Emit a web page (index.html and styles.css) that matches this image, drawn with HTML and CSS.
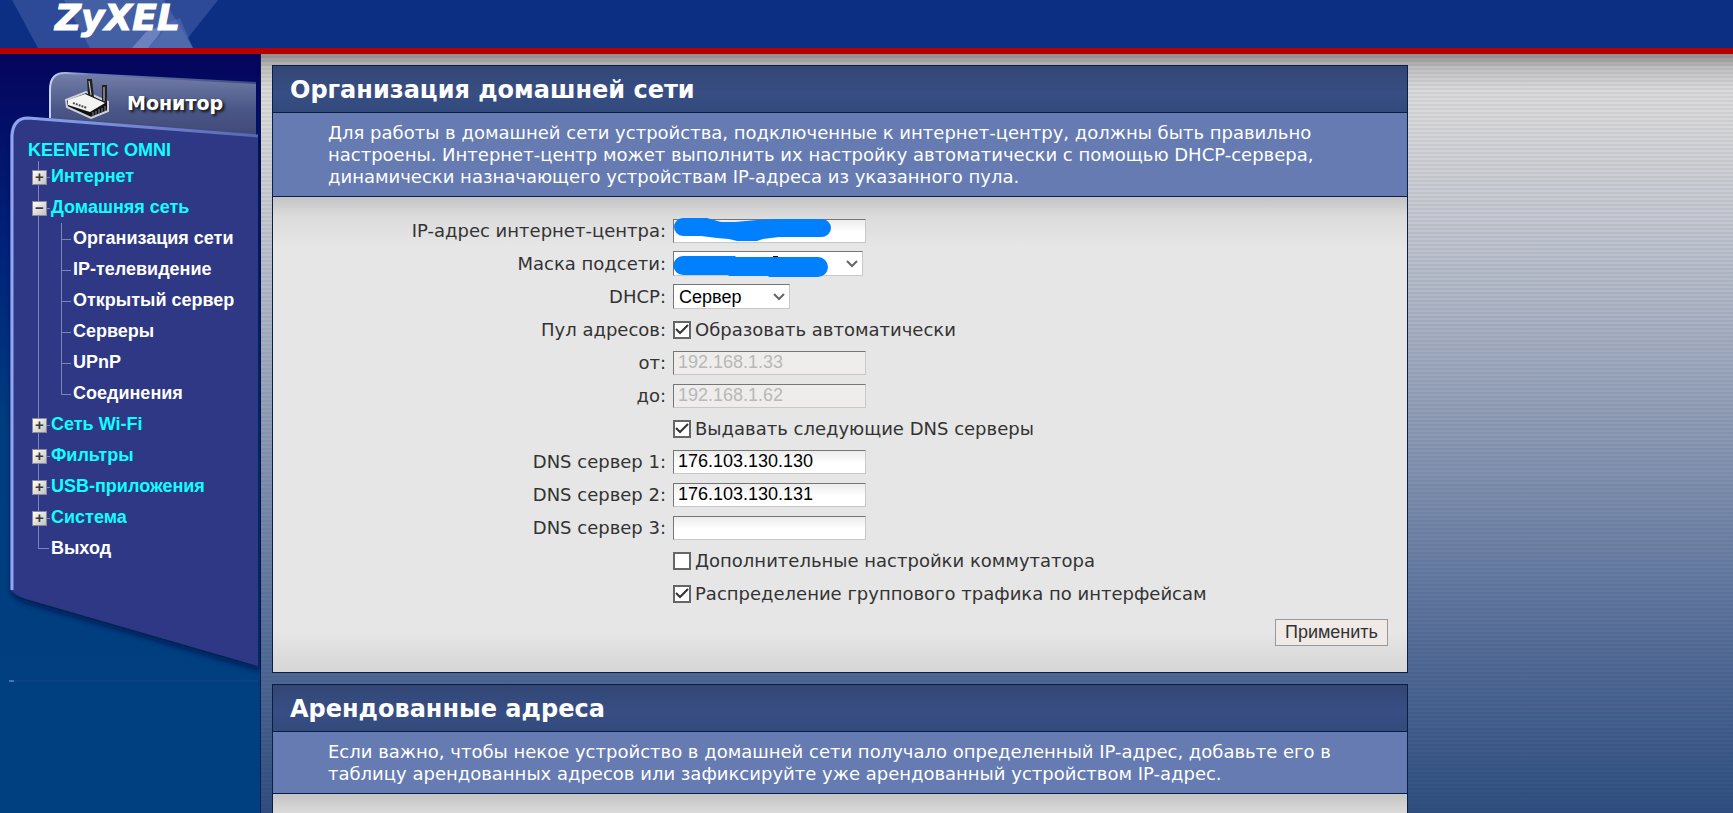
FILE: index.html
```html
<!DOCTYPE html>
<html lang="ru">
<head>
    <meta charset="utf-8">
    <title>Организация домашней сети</title>
    <link rel="stylesheet" href="styles.css">
</head>
<body>
    <header class="header">
        <svg class="header-art" width="240" height="48" viewBox="0 0 240 48" aria-hidden="true">
            <path d="M12 0H218L180 48H38Z" fill="#2c4a97"/>
            <path d="M64 0H164L193 48H90Z" fill="#4460a5"/>
            <path d="M146 32L165 24L158 36L148 48H132Z" fill="#6a82be"/>
            <path d="M165 24L180 18L193 48H148L162 34Z" fill="#5874b4" opacity="0.5"/>
        </svg>
        <span class="logo">ZyXEL</span>
    </header>

    <div class="page">
        <aside class="sidebar">
            <svg class="sidebar-art" width="261" height="640" viewBox="0 0 261 640" aria-hidden="true">
                <defs>
                    <linearGradient id="tab" x1="0" y1="0" x2="0" y2="1">
                        <stop offset="0" stop-color="#7480a8"/>
                        <stop offset="0.5" stop-color="#4b5788"/>
                        <stop offset="1" stop-color="#3c4674"/>
                    </linearGradient>
                    <linearGradient id="tabEdge" x1="0" y1="0" x2="1" y2="0">
                        <stop offset="0" stop-color="#c4d2fa"/>
                        <stop offset="0.2" stop-color="#6c7cb4"/>
                        <stop offset="1" stop-color="#3e4a7c"/>
                    </linearGradient>
                    <linearGradient id="edge" x1="0" y1="0" x2="1" y2="0">
                        <stop offset="0" stop-color="#8fa6f4"/>
                        <stop offset="1" stop-color="#5666b4"/>
                    </linearGradient>
                    <filter id="shadow" x="-10%" y="-10%" width="120%" height="120%">
                        <feDropShadow dx="2" dy="4" stdDeviation="3" flood-color="#00103c" flood-opacity="0.8"/>
                    </filter>
                </defs>
                <path d="M50 90V36Q50 18 66 19L256 29V90Z" fill="url(#tab)"/>
                <path d="M50 64V36Q50 18 66 19L256 29" fill="none" stroke="url(#tabEdge)" stroke-width="2"/>
                <path d="M10 80Q12 62 28 63L258 83V612L26 545Q14 541 10 535Z" fill="#2d3785" filter="url(#shadow)"/>
                <path d="M12 536V82Q13 64 28 64L258 82" fill="none" stroke="url(#edge)" stroke-width="3"/>
                <path d="M9 627H14" stroke="#8fa8f0"/>
                <path d="M14 627H258" stroke="#12488c"/>
            </svg>

            <a class="monitor" href="#">
                <svg width="46" height="42" viewBox="0 0 46 42" aria-hidden="true">
                    <path d="M2 22L22 14L44 24V33L27 40L3 29Z" fill="#111" stroke="#cfd2dc" stroke-width="2"/>
                    <path d="M25 17L24 2H27L29 19M39 23V8H42V25" fill="#222" stroke="#222" stroke-width="2"/>
                    <path d="M25 3L27 17M40 9V23" stroke="#cfd2dc" fill="none"/>
                    <path d="M4 22L21 16L41 25L26 34L4 27Z" fill="#f4f4f2"/>
                    <path d="M9 25L23 30" stroke="#555" stroke-width="2" stroke-dasharray="2 1"/>
                    <path d="M29 34V38M32 33V37M35 31V36M38 30V34M41 28V33" stroke="#888"/>
                </svg>
                <span>Монитор</span>
            </a>

            <nav class="menu">
                <div class="menu-title">KEENETIC OMNI</div>
                <ul class="tree">
                    <li class="plus"><a href="#">Интернет</a></li>
                    <li class="minus"><a href="#">Домашняя сеть</a>
                        <ul class="subtree">
                            <li><a href="#">Организация сети</a></li>
                            <li><a href="#">IP-телевидение</a></li>
                            <li><a href="#">Открытый сервер</a></li>
                            <li><a href="#">Серверы</a></li>
                            <li><a href="#">UPnP</a></li>
                            <li><a href="#">Соединения</a></li>
                        </ul>
                    </li>
                    <li class="plus"><a href="#">Сеть Wi-Fi</a></li>
                    <li class="plus"><a href="#">Фильтры</a></li>
                    <li class="plus"><a href="#">USB-приложения</a></li>
                    <li class="plus"><a href="#">Система</a></li>
                    <li class="exit"><a href="#">Выход</a></li>
                </ul>
            </nav>
        </aside>

        <main class="content">
            <section class="panel">
                <h1>Организация домашней сети</h1>
                <p class="note">Для работы в домашней сети устройства, подключенные к интернет-центру, должны быть правильно настроены. Интернет-центр может выполнить их настройку автоматически с помощью DHCP-сервера, динамически назначающего устройствам IP-адреса из указанного пула.</p>
                <form class="panel-body">
                    <div class="row">
                        <label class="name" for="ip">IP-адрес интернет-центра:</label>
                        <div class="field">
                            <input class="text" type="text" id="ip">
                            <svg class="marker" width="158" height="30" viewBox="0 0 158 30" aria-hidden="true">
                                <path d="M10 1H34L48 5L62 5L84 3L102 2H149A9 9 0 0 1 149 20H106L90 22L84 24H64L56 22L44 21L28 19H10A9 9 0 0 1 10 1Z" fill="#0080ff"/>
                            </svg>
                        </div>
                    </div>
                    <div class="row">
                        <label class="name" for="mask">Маска подсети:</label>
                        <div class="field">
                            <select class="wide" id="mask"><option></option></select>
                            <svg class="marker" width="158" height="30" viewBox="0 0 158 30" aria-hidden="true">
                                <path d="M100 7H105V10H100Z" fill="#000"/>
                                <path d="M10 7H62L63 8H145A10 10 0 0 1 145 28H96L95 27H56L55 26H10A9 9 0 0 1 10 7Z" fill="#0080ff"/>
                            </svg>
                        </div>
                    </div>
                    <div class="row">
                        <label class="name" for="dhcp">DHCP:</label>
                        <div class="field"><select id="dhcp"><option>Сервер</option></select></div>
                    </div>
                    <div class="row">
                        <span class="name">Пул адресов:</span>
                        <label class="field"><input type="checkbox" checked>Образовать автоматически</label>
                    </div>
                    <div class="row">
                        <label class="name" for="from">от:</label>
                        <div class="field"><input class="text" type="text" id="from" value="192.168.1.33" disabled></div>
                    </div>
                    <div class="row">
                        <label class="name" for="to">до:</label>
                        <div class="field"><input class="text" type="text" id="to" value="192.168.1.62" disabled></div>
                    </div>
                    <div class="row">
                        <label class="field"><input type="checkbox" checked>Выдавать следующие DNS серверы</label>
                    </div>
                    <div class="row">
                        <label class="name" for="dns1">DNS сервер 1:</label>
                        <div class="field"><input class="text" type="text" id="dns1" value="176.103.130.130"></div>
                    </div>
                    <div class="row">
                        <label class="name" for="dns2">DNS сервер 2:</label>
                        <div class="field"><input class="text" type="text" id="dns2" value="176.103.130.131"></div>
                    </div>
                    <div class="row">
                        <label class="name" for="dns3">DNS сервер 3:</label>
                        <div class="field"><input class="text" type="text" id="dns3"></div>
                    </div>
                    <div class="row">
                        <label class="field"><input type="checkbox">Дополнительные настройки коммутатора</label>
                    </div>
                    <div class="row">
                        <label class="field"><input type="checkbox" checked>Распределение группового трафика по интерфейсам</label>
                    </div>
                    <div class="actions">
                        <button type="button">Применить</button>
                    </div>
                </form>
            </section>

            <section class="panel">
                <h1>Арендованные адреса</h1>
                <p class="note">Если важно, чтобы некое устройство в домашней сети получало определенный IP-адрес, добавьте его в таблицу арендованных адресов или зафиксируйте уже арендованный устройством IP-адрес.</p>
                <div class="panel-body"></div>
            </section>
        </main>
    </div>
</body>
</html>
```
FILE: styles.css
```css
* {
    box-sizing: border-box;
}
body {
    margin: 0;
    height: 100vh;
    overflow: hidden;
    display: flex;
    flex-direction: column;
    font-family: "DejaVu Sans", Verdana, sans-serif;
    font-size: 18px;
    line-height: 22px;
    color: #333;
}
a {
    color: inherit;
    text-decoration: none;
}

/* header */
.header {
    position: relative;
    flex: none;
    height: 54px;
    background: #0c2f83;
    border-bottom: 6px solid #b80000;
}
.header-art {
    position: absolute;
    left: 0;
    top: 0;
}
.logo {
    position: relative;
    display: block;
    padding-left: 55px;
    font-size: 36px;
    line-height: 36px;
    font-weight: bold;
    font-style: italic;
    color: #fff;
    -webkit-text-stroke: 1px #fff;
}

.page {
    flex: 1;
    min-height: 0;
    display: flex;
}

/* left menu */
.sidebar {
    position: relative;
    flex: none;
    width: 261px;
    border-right: 1px solid #0a1c50;
    background: linear-gradient(#05045c, #00227a 190px, #003c80 370px, #004080);
    font-family: "Liberation Sans", Arial, sans-serif;
    font-size: 18px;
    font-weight: bold;
    line-height: 31px;
    color: #fff;
}
.sidebar-art {
    position: absolute;
    left: 0;
    top: 0;
}
.monitor {
    position: relative;
    display: flex;
    align-items: center;
    gap: 17px;
    padding: 20px 0 0 64px;
    height: 70px;
    font-family: "DejaVu Sans", Verdana, sans-serif;
    font-size: 19px;
    text-shadow: 2px 2px 3px #111;
}
.monitor span {
    padding-top: 8px;
}
.menu {
    position: relative;
    padding: 15px 0 0 28px;
}
.menu-title {
    line-height: 22px;
    color: #1ff;
}
.menu ul {
    list-style: none;
    margin: 0;
    padding: 0;
}
.tree > li {
    position: relative;
    padding-left: 23px;
}
.tree > li > a {
    color: #1ff;
}
.tree > .exit > a {
    color: #fff;
}
/* vertical and horizontal connectors */
.tree > li::before {
    content: "";
    position: absolute;
    left: 10px;
    top: 0;
    bottom: 0;
    border-left: 1px solid #7c84b8;
}
.tree > .plus::before,
.tree > .minus::before {
    width: 11px;
    background: linear-gradient(#7c84b8, #7c84b8) 0 16px / 11px 1px no-repeat;
}
.tree > .exit::before {
    bottom: 15px;
    width: 10px;
    border-bottom: 1px solid #7c84b8;
}
.tree > .plus::after,
.tree > .minus::after {
    content: "+";
    position: absolute;
    left: 4px;
    top: 9px;
    width: 13px;
    height: 13px;
    border: 1px solid #8a8a96;
    background: linear-gradient(135deg, #fff, #c0c0c0);
    color: #403830;
    font-size: 15px;
    line-height: 11px;
    text-align: center;
}
.tree > .minus::after {
    content: "−";
}
.subtree li {
    position: relative;
    padding-left: 22px;
}
.subtree li::before {
    content: "";
    position: absolute;
    left: 10px;
    top: 0;
    width: 9px;
    height: 16px;
    border-left: 1px solid #7c84b8;
    border-bottom: 1px solid #7c84b8;
}
.subtree li::after {
    content: "";
    position: absolute;
    left: 10px;
    top: 0;
    bottom: 0;
    border-left: 1px solid #7c84b8;
}
.subtree li:last-child::after {
    display: none;
}

/* content */
.content {
    flex: 1;
    padding: 11px 11px 0;
    background:
        linear-gradient(rgba(0, 0, 0, 0.35), rgba(0, 0, 0, 0.12) 14px, transparent 36px),
        repeating-linear-gradient(transparent 0 2px, rgba(0, 0, 50, 0.05) 2px 4px),
        linear-gradient(#dcdcdc, #d9d9d9 60px, #c3c7d0 170px, #5c739c 560px, #2f4f80 760px);
}
.panel {
    max-width: 1136px;
    margin-bottom: 11px;
    border: 1px solid #0a1f48;
    background: #e6e6e6;
}
.panel h1 {
    margin: 0;
    padding: 2px 17px 0;
    font-size: 24px;
    line-height: 44px;
    color: #fff;
    background: linear-gradient(#324775, #384e84 60%, #324a7c);
    border-bottom: 1px solid #0a1f48;
}
.note {
    margin: 0;
    padding: 9px 55px 8px;
    color: #fff;
    background: #657bb2;
    border-bottom: 1px solid #0a1f48;
}
.panel-body {
    padding: 17px 19px 26px;
    background: linear-gradient(#c4c4c4, #dcdcdc 20px, #e6e6e6 50px, #e6e6e6 calc(100% - 40px), #d6d6d6);
}
.row {
    display: grid;
    grid-template-columns: 374px 1fr;
    column-gap: 7px;
    align-items: center;
    height: 33px;
}
.name {
    text-align: right;
}
.field {
    grid-column: 2;
    position: relative;
    display: flex;
    align-items: center;
}
.text,
select {
    width: 193px;
    height: 24px;
    margin: 0;
    padding: 0 4px;
    border: 1px solid;
    border-color: #767676 #c8c8c8 #c8c8c8 #767676;
    border-radius: 0;
    background: linear-gradient(#ececec, #fff 12px);
    color: #000;
    font-family: "Liberation Sans", Arial, sans-serif;
    font-size: 18px;
}
.text:disabled {
    background: #eeedec;
    color: #b8b8b8;
}
select {
    width: 117px;
    height: 25px;
    padding: 0 5px;
    appearance: none;
    background: #fff url("data:image/svg+xml,%3Csvg xmlns='http://www.w3.org/2000/svg' width='12' height='8'%3E%3Cpath d='M1 1L6 6L11 1' fill='none' stroke='%23666' stroke-width='2'/%3E%3C/svg%3E") no-repeat right 4px center;
}
select.wide {
    width: 190px;
}
/* ink over the hidden values */
.marker {
    position: absolute;
    left: 0;
    top: -2px;
}
input[type="checkbox"] {
    appearance: none;
    flex: none;
    width: 18px;
    height: 18px;
    margin: 0 4px 0 0;
    border: 2px solid #666;
    background: #fff;
}
input[type="checkbox"]:checked {
    background: #fff url("data:image/svg+xml,%3Csvg xmlns='http://www.w3.org/2000/svg' width='14' height='14'%3E%3Cpath d='M1 6L5 10L13 2' fill='none' stroke='%23333' stroke-width='2'/%3E%3C/svg%3E") no-repeat center;
}
.actions {
    display: flex;
    justify-content: flex-end;
    padding-top: 9px;
}
button {
    width: 113px;
    height: 27px;
    padding: 0;
    border: 1px solid #999;
    background: #efeae6;
    color: #333;
    font-family: "Liberation Sans", Arial, sans-serif;
    font-size: 18px;
}
```
